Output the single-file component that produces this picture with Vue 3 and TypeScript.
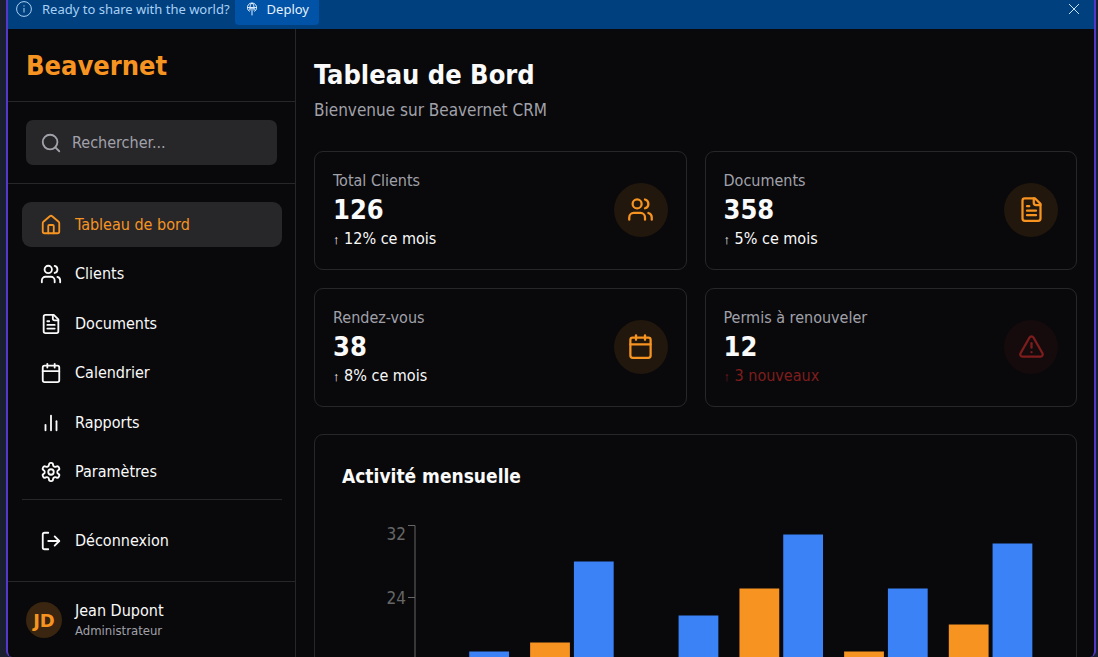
<script setup lang="ts">
import { ref } from 'vue'

type IconName = 'home' | 'users' | 'file' | 'calendar' | 'bars' | 'settings' | 'logout' | 'search' | 'alert'

const icons: Record<IconName, string[]> = {
  home: [
    'M15 21v-8a1 1 0 0 0-1-1h-4a1 1 0 0 0-1 1v8',
    'M3 10a2 2 0 0 1 .709-1.528l7-5.999a2 2 0 0 1 2.582 0l7 5.999A2 2 0 0 1 21 10v9a2 2 0 0 1-2 2H5a2 2 0 0 1-2-2z',
  ],
  users: [
    'M16 21v-2a4 4 0 0 0-4-4H6a4 4 0 0 0-4 4v2',
    'M5 7a4 4 0 1 0 8 0a4 4 0 1 0-8 0',
    'M22 21v-2a4 4 0 0 0-3-3.87',
    'M16 3.13a4 4 0 0 1 0 7.75',
  ],
  file: [
    'M15 2H6a2 2 0 0 0-2 2v16a2 2 0 0 0 2 2h12a2 2 0 0 0 2-2V7Z',
    'M14 2v4a2 2 0 0 0 2 2h4',
    'M10 9H8',
    'M16 13H8',
    'M16 17H8',
  ],
  calendar: [
    'M8 2v4',
    'M16 2v4',
    'M5 4h14a2 2 0 0 1 2 2v14a2 2 0 0 1-2 2H5a2 2 0 0 1-2-2V6a2 2 0 0 1 2-2z',
    'M3 10h18',
  ],
  bars: ['M18 20V10', 'M12 20V4', 'M6 20v-6'],
  settings: [
    'M12.22 2h-.44a2 2 0 0 0-2 2v.18a2 2 0 0 1-1 1.73l-.43.25a2 2 0 0 1-2 0l-.15-.08a2 2 0 0 0-2.73.73l-.22.38a2 2 0 0 0 .73 2.73l.15.1a2 2 0 0 1 1 1.72v.51a2 2 0 0 1-1 1.74l-.15.09a2 2 0 0 0-.73 2.73l.22.38a2 2 0 0 0 2.73.73l.15-.08a2 2 0 0 1 2 0l.43.25a2 2 0 0 1 1 1.73V20a2 2 0 0 0 2 2h.44a2 2 0 0 0 2-2v-.18a2 2 0 0 1 1-1.73l.43-.25a2 2 0 0 1 2 0l.15.08a2 2 0 0 0 2.73-.73l.22-.39a2 2 0 0 0-.73-2.73l-.15-.08a2 2 0 0 1-1-1.74v-.5a2 2 0 0 1 1-1.74l.15-.09a2 2 0 0 0 .73-2.73l-.22-.38a2 2 0 0 0-2.73-.73l-.15.08a2 2 0 0 1-2 0l-.43-.25a2 2 0 0 1-1-1.73V4a2 2 0 0 0-2-2z',
    'M9 12a3 3 0 1 0 6 0a3 3 0 1 0-6 0',
  ],
  logout: ['M9 21H5a2 2 0 0 1-2-2V5a2 2 0 0 1 2-2h4', 'M16 17l5-5-5-5', 'M21 12H9'],
  search: ['M3 11a8 8 0 1 0 16 0a8 8 0 1 0-16 0', 'M21 21l-4.3-4.3'],
  alert: [
    'M21.73 18l-8-14a2 2 0 0 0-3.48 0l-8 14A2 2 0 0 0 4 21h16a2 2 0 0 0 1.73-3',
    'M12 9v4',
    'M12 17h.01',
  ],
}

const navItems: { label: string; icon: IconName }[] = [
  { label: 'Tableau de bord', icon: 'home' },
  { label: 'Clients', icon: 'users' },
  { label: 'Documents', icon: 'file' },
  { label: 'Calendrier', icon: 'calendar' },
  { label: 'Rapports', icon: 'bars' },
  { label: 'Paramètres', icon: 'settings' },
]
const active = ref('Tableau de bord')
const query = ref('')
const bannerOpen = ref(true)

const stats: { label: string; value: number; change: string; icon: IconName; danger?: boolean }[] = [
  { label: 'Total Clients', value: 126, change: '12% ce mois', icon: 'users' },
  { label: 'Documents', value: 358, change: '5% ce mois', icon: 'file' },
  { label: 'Rendez-vous', value: 38, change: '8% ce mois', icon: 'calendar' },
  { label: 'Permis à renouveler', value: 12, change: '3 nouveaux', icon: 'alert', danger: true },
]

// One entry per month: clients, then documents
const activity = [
  { clients: 12, documents: 18 },
  { clients: 19, documents: 28 },
  { clients: 15, documents: 22 },
  { clients: 25, documents: 31 },
  { clients: 18, documents: 25 },
  { clients: 21, documents: 30 },
]

const plot = { left: 73, right: 701, top: 8.5, bottom: 296.5, max: 32 }
const ticks = [32, 24]
const slot = (plot.right - plot.left) / activity.length
const barWidth = slot * 0.38
const barX = (i: number, series: number) => plot.left + slot * (i + 0.1) + series * (barWidth + 4)
const y = (v: number) => plot.bottom - ((plot.bottom - plot.top) * v) / plot.max
</script>

<template>
  <div class="frame">
    <div v-if="bannerOpen" class="banner">
      <svg class="info" viewBox="0 0 16 16" aria-hidden="true">
        <circle cx="8" cy="8" r="7.4" />
        <path d="M8 7v4.5M8 4.4v1.2" />
      </svg>
      <span class="banner-text">Ready to share with the world?</span>
      <button class="deploy" type="button">
        <svg viewBox="0 0 14 14" aria-hidden="true">
          <path d="M4.6 9.5a4.6 4.6 0 1 1 4.8 0M2.4 5.6h9.2M7 13.4V5.4M5 7.4l2-2 2 2M5 8.6C4.400 5 5.400 2 7 1c1.600 1 2.600 4 2 7.600" />
        </svg>
        Deploy
      </button>
      <button class="close" type="button" aria-label="Close" @click="bannerOpen = false">
        <svg viewBox="0 0 12 12" aria-hidden="true"><path d="M1 1l10 10M11 1L1 11" /></svg>
      </button>
    </div>

    <div class="app">
      <aside class="sidebar">
        <div class="brand">Beavernet</div>
        <div class="search-wrap">
          <label class="search">
            <svg class="icon" viewBox="0 0 24 24" aria-hidden="true">
              <path v-for="d in icons.search" :key="d" :d="d" />
            </svg>
            <input v-model="query" type="text" placeholder="Rechercher..." aria-label="Rechercher" />
          </label>
        </div>
        <nav class="nav">
          <div class="nav-list">
            <a
              v-for="item in navItems"
              :key="item.label"
              href="#"
              class="nav-item"
              :class="{ active: active === item.label }"
              @click.prevent="active = item.label"
            >
              <svg class="icon" viewBox="0 0 24 24" aria-hidden="true">
                <path v-for="d in icons[item.icon]" :key="d" :d="d" />
              </svg>
              <span class="nav-label">{{ item.label }}</span>
            </a>
          </div>
          <div class="nav-end">
            <button class="nav-item" type="button">
              <svg class="icon" viewBox="0 0 24 24" aria-hidden="true">
                <path v-for="d in icons.logout" :key="d" :d="d" />
              </svg>
              <span class="nav-label">Déconnexion</span>
            </button>
          </div>
        </nav>
        <div class="user">
          <div class="avatar">JD</div>
          <div>
            <div class="user-name">Jean Dupont</div>
            <div class="user-role">Administrateur</div>
          </div>
        </div>
      </aside>

      <main class="main">
        <h1>Tableau de Bord</h1>
        <p class="subtitle">Bienvenue sur Beavernet CRM</p>

        <section class="stats">
          <article v-for="s in stats" :key="s.label" class="card stat" :class="{ danger: s.danger }">
            <div>
              <div class="stat-label">{{ s.label }}</div>
              <div class="stat-value">{{ s.value }}</div>
              <div class="stat-change"><span class="arrow">↑</span> {{ s.change }}</div>
            </div>
            <div class="stat-icon">
              <svg class="icon large" viewBox="0 0 24 24" aria-hidden="true">
                <path v-for="d in icons[s.icon]" :key="d" :d="d" />
              </svg>
            </div>
          </article>
        </section>

        <section class="card chart-card">
          <h2>Activité mensuelle</h2>
          <svg class="chart" viewBox="0 0 707 338" role="img" aria-label="Activité mensuelle">
            <g v-for="(m, i) in activity" :key="i">
              <rect class="bar-clients" :x="barX(i, 0)" :y="y(m.clients)" :width="barWidth" :height="plot.bottom - y(m.clients)" />
              <rect class="bar-documents" :x="barX(i, 1)" :y="y(m.documents)" :width="barWidth" :height="plot.bottom - y(m.documents)" />
            </g>
            <path class="axis" :d="`M${plot.left} ${plot.top}V${plot.bottom}H${plot.right}`" />
            <g v-for="t in ticks" :key="t">
              <path class="axis" :d="`M${plot.left - 7} ${y(t)}H${plot.left}`" />
              <text class="tick" :x="plot.left - 9" :y="t === plot.max ? y(t) + 14 : y(t) + 6">{{ t }}</text>
            </g>
          </svg>
        </section>
      </main>
    </div>
  </div>
</template>

<style>
html,
body {
  margin: 0;
  background: #1a202f;
}
</style>

<style scoped>
* {
  box-sizing: border-box;
}
.frame {
  height: 100vh;
  margin: 0 2px 0 6px;
  border: 2px solid #5438c8;
  border-width: 0 2px;
  border-radius: 0 0 6px 6px;
  overflow: hidden;
  display: flex;
  flex-direction: column;
  background: #09090b;
  color: #fafafa;
  font-family: 'DejaVu Sans Condensed', sans-serif;
  font-size: 16px;
}
button {
  border: 0;
  background: none;
  color: inherit;
  font: inherit;
  cursor: pointer;
}
.banner {
  flex: none;
  height: 29px;
  padding: 0 14px 11px 8px;
  display: flex;
  align-items: center;
  background: #00407f;
  color: #a8d0f5;
  font-family: 'Noto Sans', sans-serif;
  font-size: 13px;
}
.banner svg {
  fill: none;
  stroke: currentColor;
  flex: none;
}
.info {
  width: 16px;
  height: 16px;
  margin-right: 10px;
}
.deploy {
  height: 32px;
  margin: 0 0 0 5px;
  padding: 0 10px;
  display: flex;
  align-items: center;
  gap: 8px;
  border-radius: 4px;
  background: #0053a6;
  color: #e6f2ff;
}
.deploy svg {
  width: 14px;
  height: 14px;
}
.close {
  margin-left: auto;
  padding: 0;
  display: flex;
  color: #c5e2ff;
}
.close svg {
  width: 12px;
  height: 12px;
}
.app {
  flex: 1;
  min-height: 0;
  display: flex;
}
.sidebar {
  flex: none;
  width: 288px;
  display: flex;
  flex-direction: column;
  border-right: 1px solid #27272a;
}
.brand {
  padding: 19px 18px 17px;
  border-bottom: 1px solid #27272a;
  font-size: 27px;
  font-weight: bold;
  line-height: 36px;
  color: #f79421;
}
.search-wrap {
  padding: 18px;
  border-bottom: 1px solid #27272a;
}
.search {
  display: flex;
  align-items: center;
  gap: 10px;
  height: 45px;
  padding: 0 14px;
  border-radius: 7px;
  background: #27272a;
  color: #a1a1aa;
}
.search input {
  flex: 1;
  min-width: 0;
  padding: 0;
  border: 0;
  outline: 0;
  background: none;
  color: #fafafa;
  font: inherit;
}
.search input::placeholder {
  color: #a1a1aa;
  opacity: 1;
}
.icon {
  flex: none;
  width: 22px;
  height: 22px;
  fill: none;
  stroke: currentColor;
  stroke-width: 2;
  stroke-linecap: round;
  stroke-linejoin: round;
}
.icon.large {
  width: 27px;
  height: 27px;
}
.nav {
  flex: 1;
  padding: 18px 13px 18px 14px;
}
.nav-list {
  min-height: 293px;
  display: flex;
  flex-direction: column;
  justify-content: space-between;
}
.nav-item {
  width: 100%;
  height: 45px;
  padding: 0 18px;
  display: flex;
  align-items: center;
  gap: 13px;
  border-radius: 9px;
  color: #fafafa;
  text-decoration: none;
}
.nav-label {
  padding-bottom: 1px;
}
.nav-item.active {
  background: #27272a;
  color: #f79421;
}
.nav-end {
  margin-top: 4px;
  padding-top: 18px;
  border-top: 1px solid #27272a;
}
.user {
  flex: none;
  display: flex;
  align-items: center;
  gap: 13px;
  padding: 18px;
  border-top: 1px solid #27272a;
}
.avatar {
  width: 36px;
  height: 36px;
  display: grid;
  place-items: center;
  border-radius: 50%;
  background: #392510;
  color: #f79421;
  font: bold 18px 'DejaVu Sans', sans-serif;
}
.user-name {
  line-height: 22px;
}
.user-role {
  color: #a1a1aa;
  font-size: 13px;
  line-height: 18px;
}
.main {
  flex: 1;
  min-width: 0;
  padding: 28px 17px 27px 18px;
  overflow: hidden;
}
h1 {
  margin: 0;
  font-size: 27px;
  font-weight: bold;
  line-height: 36px;
}
.subtitle {
  margin: 4px 0 27px;
  color: #a1a1aa;
  font-size: 17px;
  line-height: 27px;
}
.stats {
  display: grid;
  grid-template-columns: 1fr 1fr;
  gap: 18px;
}
.card {
  border: 1px solid #27272a;
  border-radius: 9px;
}
.stat {
  display: flex;
  align-items: center;
  justify-content: space-between;
  padding: 17px 18px 19px;
}
.stat-label {
  color: #a1a1aa;
  line-height: 23px;
}
.stat-value {
  font-size: 27px;
  font-weight: bold;
  line-height: 36px;
}
.stat-change {
  line-height: 22px;
}
.arrow {
  font-family: 'Noto Sans', sans-serif;
  font-size: 13px;
  line-height: 1;
}
.stat-icon {
  width: 54px;
  height: 54px;
  display: grid;
  place-items: center;
  border-radius: 50%;
  background: #21170d;
  color: #f79421;
}
.danger .stat-change {
  color: #7f1d1d;
}
.danger .stat-icon {
  background: #150b0d;
  color: #7f1d1d;
}
.chart-card {
  margin-top: 27px;
  padding: 27px;
}
h2 {
  margin: 0 0 27px;
  font-size: 19px;
  font-weight: bold;
  line-height: 28px;
}
.chart {
  display: block;
  width: 100%;
}
.bar-clients {
  fill: #f79421;
}
.bar-documents {
  fill: #3b82f6;
}
.axis {
  fill: none;
  stroke: #666;
  stroke-width: 1;
}
.tick {
  fill: #666;
  font-size: 17px;
  text-anchor: end;
}
</style>
